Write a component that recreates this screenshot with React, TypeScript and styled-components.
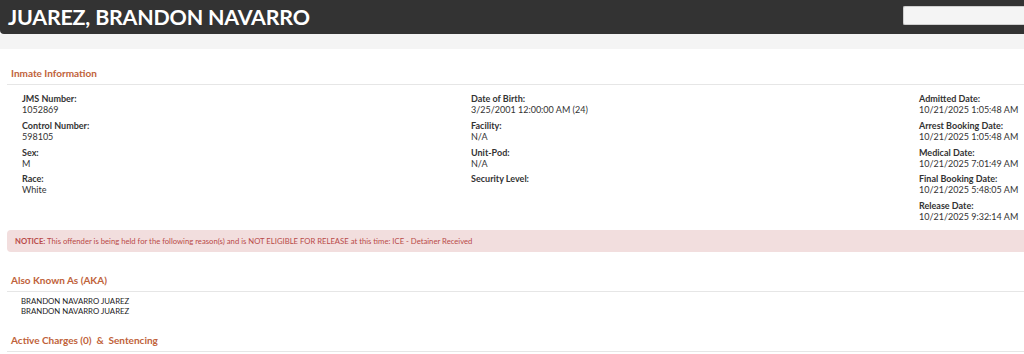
import React from 'react'
import styled, { createGlobalStyle } from 'styled-components'

const GlobalStyle = createGlobalStyle`
   body {
      margin: 0;
      background: #fff;
      font-family: Lato, 'Open Sans', sans-serif;
      overflow: hidden;
   }
`

const Page = styled.div`
   width: 1024px;
   height: 354px;
   overflow: hidden;
`

const TitleBar = styled.header`
   display: flex;
   align-items: center;
   justify-content: space-between;
   height: 34px;
   background: #333333;
   border-bottom-left-radius: 4px;
   padding-left: 8px;
`

const Title = styled.h1`
   margin: 0;
   color: #fff;
   font-size: 21.4px;
   font-weight: 700;
   letter-spacing: -0.2px;
   line-height: 34px;
`

const Search = styled.input`
   width: 121px;
   height: 19px;
   box-sizing: border-box;
   margin-bottom: 3px;
   border: 1px solid #cfcfcf;
   border-right: none;
   border-radius: 2px 0 0 2px;
   background: #f4f4f4;
`

const SubBar = styled.div`
   height: 15px;
   background: #f4f4f4;
`

const Content = styled.main`
   padding: 0 0 0 7px;
`

const SectionHeading = styled.h2<{ $top: number }>`
   margin: 0;
   padding: ${p => p.$top}px 0 2px 4px;
   height: 18px;
   color: #c0623a;
   font-size: 10px;
   font-weight: 700;
   line-height: 18px;
   border-bottom: 1px solid #e6e6e6;
`

const InfoGrid = styled.div`
   display: grid;
   grid-template-columns: 449px 448px 449px;
   padding: 8px 0 0 15px;
`

const Column = styled.div`
   display: flex;
   flex-direction: column;
   gap: 4.75px;
`

const Field = styled.div`
   display: flex;
   flex-direction: column;
   font-size: 9px;
   line-height: 11px;
   color: #333;
`

const Label = styled.span`
   font-weight: 700;
`

const Notice = styled.div`
   margin-top: 8px;
   height: 22px;
   display: flex;
   align-items: center;
   padding-left: 8px;
   background: #f2dede;
   border-radius: 4px 0 0 4px;
   color: #b94a48;
   font-size: 7.7px;
   white-space: pre;

   b {
      font-weight: 700;
   }
`

const AkaList = styled.div`
   padding: 4px 0 0 14px;
   font-size: 7.8px;
   line-height: 10px;
   color: #222;
`

type FieldData = { label: string; value?: string }

const columns: FieldData[][] = [
   [
      { label: 'JMS Number:', value: '1052869' },
      { label: 'Control Number:', value: '598105' },
      { label: 'Sex:', value: 'M' },
      { label: 'Race:', value: 'White' },
   ],
   [
      { label: 'Date of Birth:', value: '3/25/2001 12:00:00 AM (24)' },
      { label: 'Facility:', value: 'N/A' },
      { label: 'Unit-Pod:', value: 'N/A' },
      { label: 'Security Level:' },
   ],
   [
      { label: 'Admitted Date:', value: '10/21/2025 1:05:48 AM' },
      { label: 'Arrest Booking Date:', value: '10/21/2025 1:05:48 AM' },
      { label: 'Medical Date:', value: '10/21/2025 7:01:49 AM' },
      { label: 'Final Booking Date:', value: '10/21/2025 5:48:05 AM' },
      { label: 'Release Date:', value: '10/21/2025 9:32:14 AM' },
   ],
]

const aliases = ['BRANDON NAVARRO JUAREZ', 'BRANDON NAVARRO JUAREZ']

export default function App() {
   return (
      <Page>
         <GlobalStyle />
         <TitleBar>
            <Title>JUAREZ, BRANDON NAVARRO</Title>
            <Search type="text" />
         </TitleBar>
         <SubBar />
         <Content>
            <SectionHeading $top={15}>Inmate Information</SectionHeading>
            <InfoGrid>
               {columns.map((col, i) => (
                  <Column key={i}>
                     {col.map(f => (
                        <Field key={f.label}>
                           <Label>{f.label}</Label>
                           {f.value && <span>{f.value}</span>}
                        </Field>
                     ))}
                  </Column>
               ))}
            </InfoGrid>
            <Notice>
               <b>NOTICE:</b> This offender is being held for the following reason(s) and is NOT ELIGIBLE FOR RELEASE at this time: ICE - Detainer Received
            </Notice>
            <SectionHeading $top={19}>Also Known As (AKA)</SectionHeading>
            <AkaList>
               {aliases.map((a, i) => (
                  <div key={i}>{a}</div>
               ))}
            </AkaList>
            <SectionHeading $top={15}>Active Charges (0)&nbsp; &amp; &nbsp;Sentencing</SectionHeading>
         </Content>
      </Page>
   )
}
